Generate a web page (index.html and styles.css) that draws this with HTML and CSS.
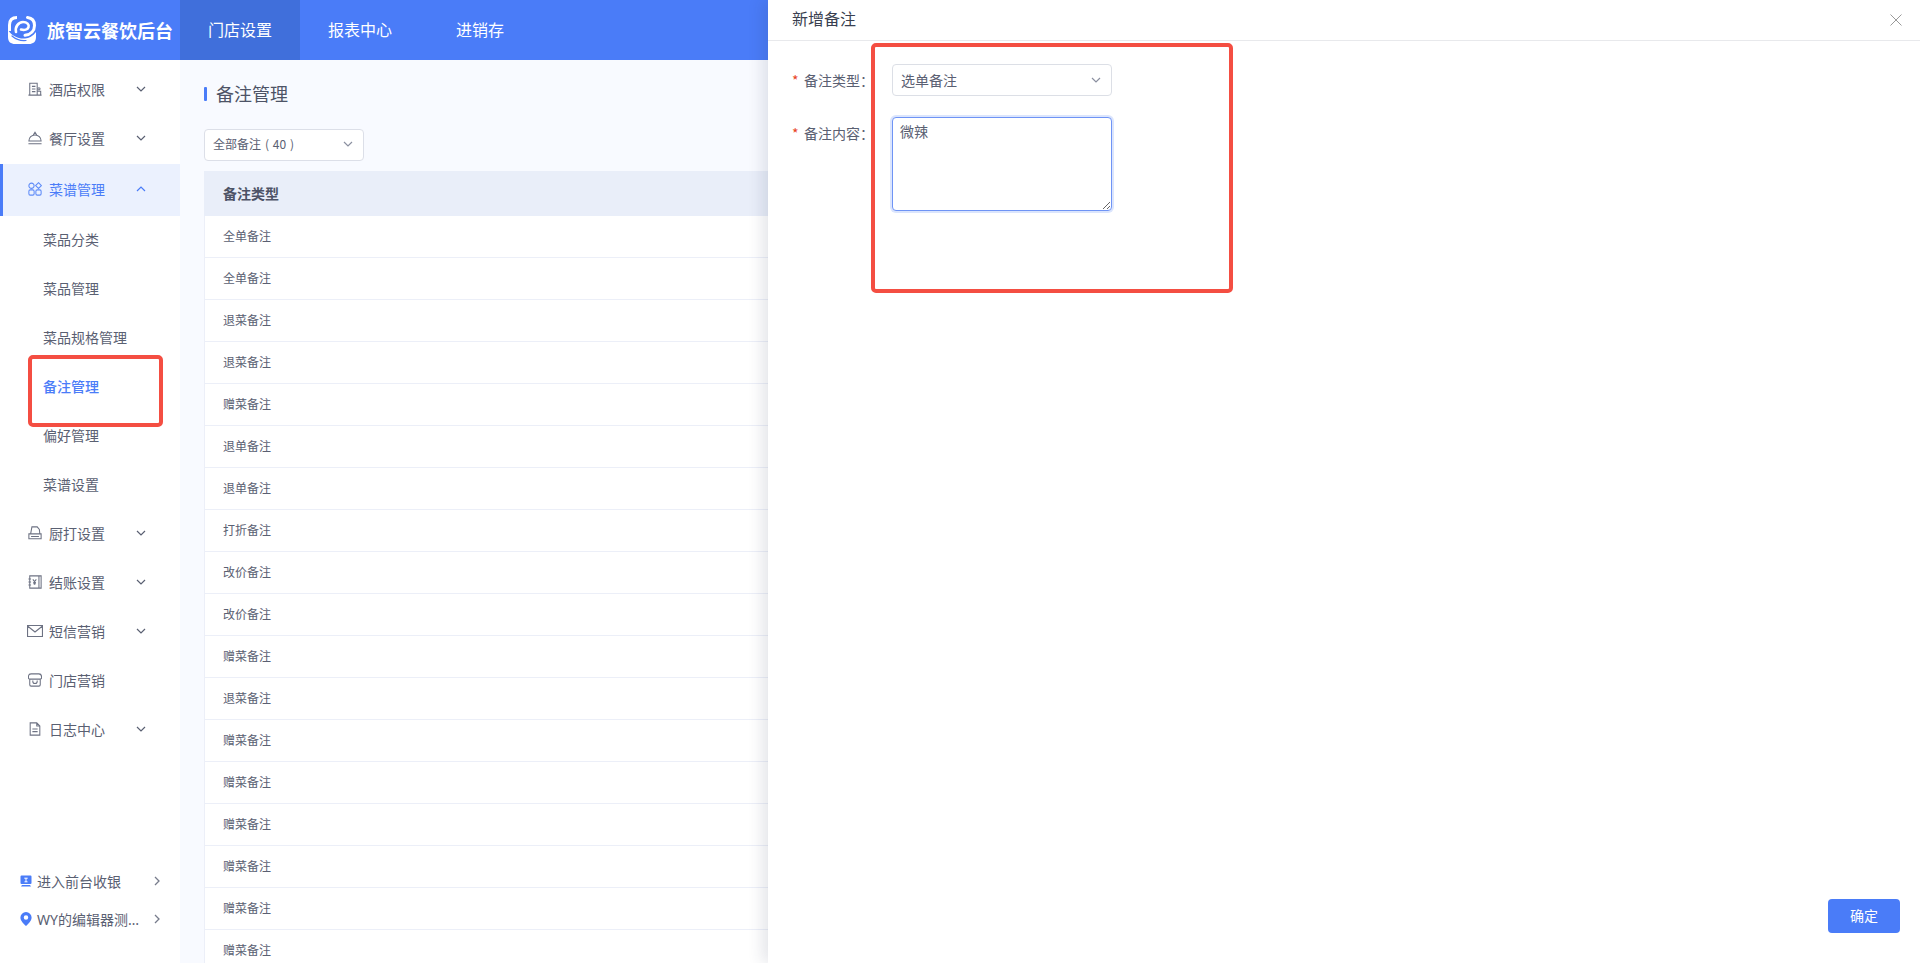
FILE: index.html
```html
<!DOCTYPE html>
<html lang="zh-CN">
<head>
<meta charset="utf-8">
<title>备注管理</title>
<link rel="stylesheet" href="styles.css">
</head>
<body>
<div class="app">
  <header class="topbar">
    <div class="brand">
      <svg class="logo" viewBox="0 0 28 28">
        <path d="M1.500 15V9c0-5 2.500-7.500 7.500-7.500" fill="none" stroke="#fff" stroke-width="3"/>
        <path d="M19.500 1.500c4.500.5 7 3 7 8 0 5-3.500 9-9.500 9.800" fill="none" stroke="#fff" stroke-width="3" stroke-linecap="round"/>
        <path d="M8 16c-1.200-5 2.500-10 7-10 4 0 6.500 2.600 5.500 5.200-.8 2.300-4 3.300-7.500 2.300" fill="none" stroke="#fff" stroke-width="2.600" stroke-linecap="round"/>
        <path d="M0 14c4 6 10 9 17 8.500 4-.3 8-2.500 11-6.500v5c0 5-3 7-7 7H7c-4 0-7-2-7-7z" fill="#fff"/>
        <path d="M4 20c4 3.500 9 5 14 4.500" fill="none" stroke="#4a7cf8" stroke-width="1.200" stroke-linecap="round"/>
      </svg>
      <span class="brand-name">旅智云餐饮后台</span>
    </div>
    <nav class="topnav">
      <a class="topnav-item is-active">门店设置</a>
      <a class="topnav-item">报表中心</a>
      <a class="topnav-item">进销存</a>
    </nav>
  </header>

  <div class="layout">
    <aside class="sidebar">
      <ul class="menu">
        <li class="menu-item">
          <svg class="icon" viewBox="0 0 16 16"><path d="M2 15V1.500h8.500V15M.5 15h15M4.500 5h4M4.500 8h4M4.500 11h4M10.500 15v-4.500h4V15"/><circle cx="12.500" cy="7.800" r="1.300"/></svg>
          <span class="menu-text">酒店权限</span>
          <svg class="chev" viewBox="0 0 10 6"><path d="M1 1l4 4 4-4"/></svg>
        </li>
        <li class="menu-item">
          <svg class="icon" viewBox="0 0 16 16"><path d="M1 11.500a7 7 0 0 1 14 0zM6 4.500L8 1.500l2 3M.5 14.500h15"/></svg>
          <span class="menu-text">餐厅设置</span>
          <svg class="chev" viewBox="0 0 10 6"><path d="M1 1l4 4 4-4"/></svg>
        </li>
        <li class="menu-item is-open">
          <svg class="icon" viewBox="0 0 16 16"><rect x="1" y="9" width="6" height="6" rx="1.500"/><rect x="9" y="9" width="6" height="6" rx="1.500"/><circle cx="4" cy="4.300" r="3"/><path d="M12 .8l3.300 3.300L12 7.400 8.700 4.100z"/></svg>
          <span class="menu-text">菜谱管理</span>
          <svg class="chev" viewBox="0 0 10 6"><path d="M1 5l4-4 4 4"/></svg>
        </li>
        <li class="submenu-item">菜品分类</li>
        <li class="submenu-item">菜品管理</li>
        <li class="submenu-item">菜品规格管理</li>
        <li class="submenu-item is-current">备注管理</li>
        <li class="submenu-item">偏好管理</li>
        <li class="submenu-item">菜谱设置</li>
        <li class="menu-item">
          <svg class="icon" viewBox="0 0 16 16"><path d="M3 9l1.500-8h6L13 4l.5 5M1 9h14v5.500H1zM3.500 12h9"/></svg>
          <span class="menu-text">厨打设置</span>
          <svg class="chev" viewBox="0 0 10 6"><path d="M1 1l4 4 4-4"/></svg>
        </li>
        <li class="menu-item">
          <svg class="icon" viewBox="0 0 16 16"><path d="M2 1h13v14H2zM12.500 1v14M.5 4.500h3M.5 8h3M.5 11.500h3M5.500 5l2 2.500 2-2.500M7.500 7.500V11M6 8.500h3M6 10h3"/></svg>
          <span class="menu-text">结账设置</span>
          <svg class="chev" viewBox="0 0 10 6"><path d="M1 1l4 4 4-4"/></svg>
        </li>
        <li class="menu-item">
          <svg class="icon icon-mail" viewBox="0 0 16 12"><path d="M.5.500h15v11H.5zM.5 1l7.500 6 7.500-6"/></svg>
          <span class="menu-text">短信营销</span>
          <svg class="chev" viewBox="0 0 10 6"><path d="M1 1l4 4 4-4"/></svg>
        </li>
        <li class="menu-item">
          <svg class="icon" viewBox="0 0 16 16"><path d="M3.500 1h9c1.800 0 3 1.500 3 3.500v1c0 1-1 1.500-1.500 1.500H2c-.5 0-1.500-.5-1.500-1.500v-1C.5 2.500 1.700 1 3.500 1z"/><path d="M2 7v6.500c0 .8.700 1.500 1.500 1.500h9c.8 0 1.500-.7 1.500-1.500V7M5.500 8.500v1.200c0 1.300 1 2.300 2.500 2.300s2.500-1 2.500-2.300V8.500"/></svg>
          <span class="menu-text">门店营销</span>
        </li>
        <li class="menu-item">
          <svg class="icon" viewBox="0 0 16 16"><path d="M2.500 1h7.500l3.500 3.500V15h-11zM10 1v3.500h3.500M5 8h6M5 11h6"/></svg>
          <span class="menu-text">日志中心</span>
          <svg class="chev" viewBox="0 0 10 6"><path d="M1 1l4 4 4-4"/></svg>
        </li>
      </ul>
      <div class="side-foot">
        <div class="foot-row">
          <svg class="foot-icon" viewBox="0 0 12 12"><path d="M1.500.5h9a1 1 0 0 1 1 1V8a1 1 0 0 1-1 1h-9a1 1 0 0 1-1-1V1.500a1 1 0 0 1 1-1zM2 10h8l1 1.500H1z" fill="#4a7cf8"/><path d="M4.300 3.200h3.400M6 3.200v3.500M4.500 6.800h3" stroke="#fff" fill="none"/></svg>
          <span class="foot-text">进入前台收银</span>
          <svg class="foot-chev" viewBox="0 0 6 10"><path d="M1 1l4 4-4 4"/></svg>
        </div>
        <div class="foot-row">
          <svg class="foot-icon" viewBox="0 0 12 15"><path fill-rule="evenodd" d="M6 0a6 6 0 0 1 6 6c0 3.500-3.500 7-6 9-2.500-2-6-5.500-6-9a6 6 0 0 1 6-6zm0 3.600a2.400 2.400 0 1 0 0 4.800 2.400 2.400 0 0 0 0-4.800z" fill="#4a7cf8"/></svg>
          <span class="foot-text">WY的编辑器测…</span>
          <svg class="foot-chev" viewBox="0 0 6 10"><path d="M1 1l4 4-4 4"/></svg>
        </div>
      </div>
    </aside>

    <main class="main">
      <h1 class="page-title">备注管理</h1>
      <div class="filter">
        <span>全部备注 ( 40 )</span>
        <svg class="chev chev-light" viewBox="0 0 10 6"><path d="M1 1l4 4 4-4"/></svg>
      </div>
      <div class="table">
        <div class="table-head">备注类型</div>
        <div class="table-row">全单备注</div>
        <div class="table-row">全单备注</div>
        <div class="table-row">退菜备注</div>
        <div class="table-row">退菜备注</div>
        <div class="table-row">赠菜备注</div>
        <div class="table-row">退单备注</div>
        <div class="table-row">退单备注</div>
        <div class="table-row">打折备注</div>
        <div class="table-row">改价备注</div>
        <div class="table-row">改价备注</div>
        <div class="table-row">赠菜备注</div>
        <div class="table-row">退菜备注</div>
        <div class="table-row">赠菜备注</div>
        <div class="table-row">赠菜备注</div>
        <div class="table-row">赠菜备注</div>
        <div class="table-row">赠菜备注</div>
        <div class="table-row">赠菜备注</div>
        <div class="table-row">赠菜备注</div>
      </div>
    </main>
  </div>

  <section class="drawer">
    <div class="drawer-head">
      <span class="drawer-title">新增备注</span>
      <svg class="drawer-close" viewBox="0 0 12 12"><path d="M.5.500l11 11M11.500.500l-11 11"/></svg>
    </div>
    <div class="drawer-body">
      <div class="form-row">
        <label class="form-label"><span class="req">*</span>备注类型：</label>
        <div class="form-select">
          <span>选单备注</span>
          <svg class="chev chev-light" viewBox="0 0 10 6"><path d="M1 1l4 4 4-4"/></svg>
        </div>
      </div>
      <div class="form-row">
        <label class="form-label"><span class="req">*</span>备注内容：</label>
        <textarea class="form-area">微辣</textarea>
      </div>
    </div>
    <div class="drawer-foot">
      <button class="btn-primary">确定</button>
    </div>
  </section>

  <div class="mark mark-menu"></div>
  <div class="mark mark-form"></div>
</div>
</body>
</html>
```
FILE: styles.css
```css
* { box-sizing: border-box; }
html, body { margin: 0; height: 100%; overflow: hidden; }
body {
  font-family: "Noto Sans CJK SC", "Noto Sans", sans-serif;
  color: #5a6072;
  background: #fff;
}
ul { list-style: none; margin: 0; padding: 0; }

.app { position: relative; height: 963px; display: flex; flex-direction: column; overflow: hidden; }

/* top bar */
.topbar { height: 60px; flex: none; display: flex; background: #4a7cf8; color: #fff; }
.brand { width: 180px; display: flex; align-items: center; padding-left: 8px; gap: 11px; }
.logo { width: 28px; height: 28px; flex: none; }
.brand-name { font-size: 18px; font-weight: 700; white-space: nowrap; margin-right: -4px; }
.topnav { display: flex; }
.topnav-item { padding: 0 28px 2px; display: flex; align-items: center; font-size: 16px; color: #fff; }
.topnav-item:last-child { margin-left: 8px; }
.topnav-item.is-active { background: #406fdb; }

.layout { flex: 1; min-height: 0; display: flex; }

/* sidebar */
.sidebar { width: 180px; flex: none; background: #fff; display: flex; flex-direction: column; justify-content: space-between; padding: 6px 0 24px; }
.menu-item { height: 49px; display: flex; align-items: center; padding: 0 0 3px 28px; font-size: 14px; color: #5a6072; position: relative; }
.menu-text { margin-left: 7px; width: 56px; }
.icon { width: 14px; height: 14px; flex: none; fill: none; stroke: #6d7283; stroke-width: 1.200; }
.icon-mail { width: 16px; height: 12px; margin-left: -1px; margin-right: -1px; }
.chev { width: 10px; height: 6px; flex: none; fill: none; stroke: #5a6072; stroke-width: 1.200; }
.menu-item .chev { margin-left: 31px; }
.menu-item.is-open { height: 52px; background: #ebf1fe; color: #4a7cf8; border-left: 3px solid #4a7cf8; padding-left: 25px; }
.menu-item.is-open .icon { stroke: #5f8cf8; }
.menu-item.is-open .chev { stroke: #4a7cf8; }
.submenu-item { height: 49px; display: flex; align-items: center; padding: 0 0 3px 43px; font-size: 14px; color: #5a6072; }
.submenu-item.is-current { color: #4a7cf8; font-weight: 500; }

.side-foot { display: flex; flex-direction: column; }
.foot-row { height: 38px; display: flex; align-items: center; padding: 0 0 2px 20px; font-size: 14px; color: #5a6072; }
.foot-icon { width: 12px; height: 14px; flex: none; }
.foot-text { margin-left: 5px; width: 115px; white-space: nowrap; font-family: "Noto Sans", "Noto Sans CJK SC", sans-serif; }
.foot-chev { width: 6px; height: 10px; margin-left: 2px; flex: none; fill: none; stroke: #777c8c; stroke-width: 1.300; }

/* main */
.main { flex: 1; min-width: 0; background: #f8faff; padding: 21px 0 0 24px; overflow: hidden; }
.page-title { margin: 0; height: 24px; line-height: 24px; font-size: 18px; font-weight: 400; color: #4d5366; position: relative; padding-left: 12px; }
.page-title::before { content: ""; position: absolute; left: 0; top: 6px; width: 3px; height: 14px; border-radius: 1px; background: #4a7cf8; }
.filter { margin-top: 24px; width: 160px; height: 32px; background: #fff; border: 1px solid #dcdfe8; border-radius: 4px; display: flex; align-items: center; justify-content: space-between; padding: 0 10px 3px 8px; font-size: 12px; word-spacing: 1.200px; color: #5a6072; }
.chev-light { stroke: #8b90a0; }
.table { margin-top: 10px; background: #fff; border-left: 1px solid #eceff8; }
.table-head { height: 45px; margin-left: -1px; padding: 0 0 2px 19px; display: flex; align-items: center; background: #e9eef9; font-size: 14px; font-weight: 700; color: #4d5366; }
.table-row { height: 42px; padding: 0 0 2px 18px; display: flex; align-items: center; border-bottom: 1px solid #eceff8; font-size: 12px; color: #5a6072; }

/* drawer */
.drawer { position: absolute; top: 0; right: 0; bottom: 0; width: 1152px; background: #fff; box-shadow: -6px 0 14px rgba(40, 50, 80, 0.12); display: flex; flex-direction: column; }
.drawer-head { height: 41px; flex: none; border-bottom: 1px solid #e8e9ec; display: flex; align-items: center; justify-content: space-between; padding: 0 18px 0 24px; }
.drawer-title { font-size: 16px; line-height: 22px; color: #3a3f50; margin-bottom: 5px; }
.drawer-close { width: 12px; height: 12px; fill: none; stroke: #9a9a9a; stroke-width: 1; }
.drawer-body { flex: 1; padding: 23px 0 0 24px; display: flex; flex-direction: column; gap: 21px; }
.form-row { display: flex; align-items: flex-start; }
.form-label { width: 100px; height: 32px; display: flex; align-items: center; font-size: 14px; color: #5a6072; flex: none; }
.req { width: 12px; color: #e8431f; font-size: 14px; }
.form-select { width: 220px; height: 32px; border: 1px solid #dcdfe6; border-radius: 4px; display: flex; align-items: center; justify-content: space-between; padding: 0 10px 0 8px; font-size: 14px; color: #5a6072; }
.form-area { width: 220px; height: 94px; padding: 3px 7px; border: 1px solid #6f94f5; border-radius: 4px; box-shadow: 0 0 0 2px #dbe5fd; outline: none; font: inherit; font-size: 14px; line-height: 20px; color: #5a6072; display: block; background: #fff; }
.drawer-foot { display: flex; justify-content: flex-end; padding: 0 20px 30px 0; }
.btn-primary { width: 72px; height: 34px; padding: 0 0 2px; border: 0; border-radius: 4px; background: #4a7cf8; color: #fff; font: inherit; font-size: 14px; }

/* annotation rectangles */
.mark { position: absolute; border: 4px solid #f44e42; border-radius: 5px; pointer-events: none; }
.mark-menu { left: 28px; top: 355px; width: 135px; height: 72px; }
.mark-form { left: 871px; top: 43px; width: 362px; height: 250px; }
```
